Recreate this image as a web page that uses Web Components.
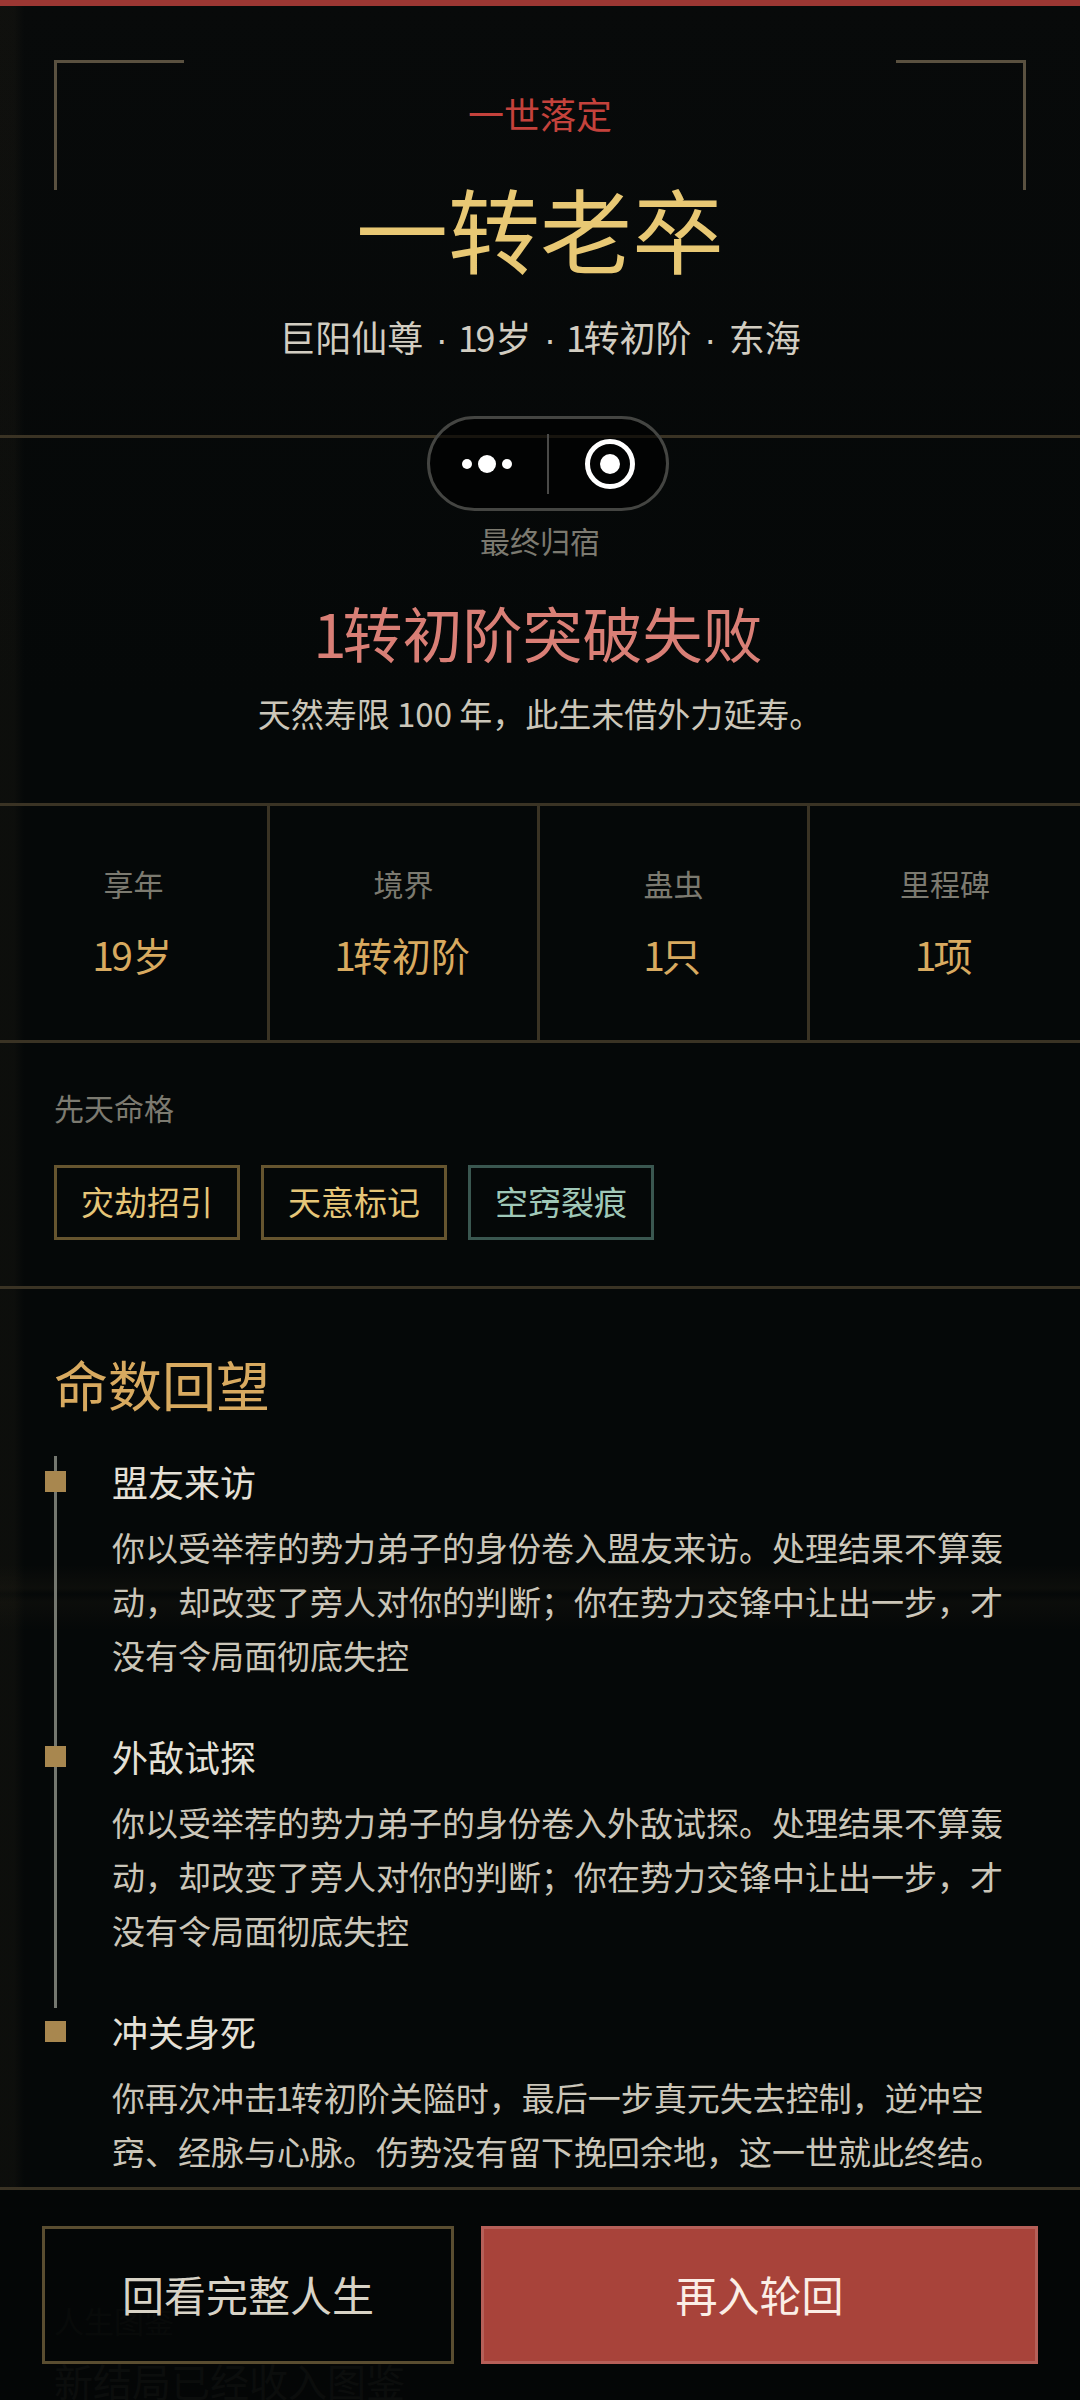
<!DOCTYPE html>
<html lang="zh-CN">
<head>
<meta charset="utf-8">
<title>一世落定</title>
<style>
  html,body{margin:0;padding:0;background:#050808;}
  body{font-family:"Noto Sans CJK SC","Noto Sans",sans-serif;}
  /* the reference face has a narrow 1 and a small middle dot */
  .one{margin:0 -.07em;}
  .sep{font-family:"Liberation Sans",sans-serif;line-height:0;margin:0 2.6px;white-space:pre;}
</style>
</head>
<body>
<result-page>
  <result-hero>
    <span slot="eyebrow">一世落定</span>
    <span slot="name">一转老卒</span>
    <span slot="meta">巨阳仙尊<span class="sep"> · </span><span class="one">1</span>9岁<span class="sep"> · </span><span class="one">1</span>转初阶<span class="sep"> · </span>东海</span>
  </result-hero>
  <result-outcome>
    <span slot="label">最终归宿</span>
    <span slot="main"><span class="one">1</span>转初阶突破失败</span>
    <span slot="desc">天然寿限 100 年，此生未借外力延寿。</span>
  </result-outcome>
  <result-stats>
    <stat-cell label="享年" value="19岁"></stat-cell>
    <stat-cell label="境界" value="1转初阶"></stat-cell>
    <stat-cell label="蛊虫" value="1只"></stat-cell>
    <stat-cell label="里程碑" value="1项"></stat-cell>
  </result-stats>
  <fate-traits>
    <fate-tag>灾劫招引</fate-tag>
    <fate-tag>天意标记</fate-tag>
    <fate-tag tone="jade">空窍裂痕</fate-tag>
  </fate-traits>
  <life-review>
    <span slot="heading">命数回望</span>
    <review-item>
      <span slot="head">盟友来访</span>
      你以受举荐的势力弟子的身份卷入盟友来访。处理结果不算轰动，却改变了旁人对你的判断；你在势力交锋中让出一步，才没有令局面彻底失控
    </review-item>
    <review-item>
      <span slot="head">外敌试探</span>
      你以受举荐的势力弟子的身份卷入外敌试探。处理结果不算轰动，却改变了旁人对你的判断；你在势力交锋中让出一步，才没有令局面彻底失控
    </review-item>
    <review-item last>
      <span slot="head">冲关身死</span>
      你再次冲击<span class="one">1</span>转初阶关隘时，最后一步真元失去控制，逆冲空窍、经脉与心脉。伤势没有留下挽回余地，这一世就此终结。
    </review-item>
  </life-review>
  <codex-note>
    <span slot="label">人生图鉴</span>
    新结局已经收入图鉴
  </codex-note>
  <app-capsule slot="overlay"></app-capsule>
  <action-bar slot="overlay">
    <action-button>回看完整人生</action-button>
    <action-button primary>再入轮回</action-button>
  </action-bar>
</result-page>

<script>
const sectionLine = '#3a3324'

customElements.define('result-page', class extends HTMLElement {
  constructor() {
    super()
    this.attachShadow({ mode: 'open' }).innerHTML = `
    <style>
      :host{
        display:block;
        position:relative;
        width:1080px;
        height:2400px;
        overflow:hidden;
        color:#cfcabd;
        background-color:#050808;
        background-image:
          linear-gradient(180deg,rgba(60,50,30,0) 1565px,rgba(60,50,30,.14) 1588px,rgba(60,50,30,0) 1594px,rgba(60,50,30,.12) 1602px,rgba(60,50,30,0) 1630px),
          linear-gradient(90deg,rgba(70,60,40,.12) 0,rgba(70,60,40,.12) 14px,rgba(70,60,40,0) 24px),
          linear-gradient(180deg,#080a0a 0,#050808 700px);
      }
      .bar{height:6px;background:#9b3733;}
    </style>
    <div class="bar"></div>
    <slot></slot>
    <slot name="overlay"></slot>`
  }
})

customElements.define('result-hero', class extends HTMLElement {
  constructor() {
    super()
    this.attachShadow({ mode: 'open' }).innerHTML = `
    <style>
      :host{
        display:block;
        position:relative;
        padding:85px 0 74px;
        text-align:center;
        border-bottom:3px solid ${sectionLine};
      }
      .eyebrow{font-size:36px;line-height:44px;color:#c4423c;}
      .name{margin-top:37px;font-size:92px;line-height:110px;color:#e8c874;}
      .meta{margin-top:29px;font-size:36px;line-height:50px;color:#d2cdc1;}
      .corner{position:absolute;top:54px;width:127px;height:127px;border-top:3px solid #5a5140;}
      .corner.l{left:54px;border-left:3px solid #5a5140;}
      .corner.r{right:54px;border-right:3px solid #5a5140;}
    </style>
    <i class="corner l"></i>
    <i class="corner r"></i>
    <div class="eyebrow"><slot name="eyebrow"></slot></div>
    <div class="name"><slot name="name"></slot></div>
    <div class="meta"><slot name="meta"></slot></div>`
  }
})

// the host app's menu capsule, it floats over the page
customElements.define('app-capsule', class extends HTMLElement {
  constructor() {
    super()
    this.attachShadow({ mode: 'open' }).innerHTML = `
    <style>
      :host{
        display:block;
        position:absolute;
        left:427px;
        top:416px;
        width:242px;
        height:95px;
      }
      svg{display:block;}
    </style>
    <svg width="242" height="95" viewBox="0 0 242 95">
      <rect x="1.5" y="1.5" width="239" height="92" rx="46" fill="#000" fill-opacity=".6" stroke="#444542" stroke-width="3"/>
      <rect x="120" y="18" width="2" height="60" fill="#4a4a48"/>
      <circle cx="40" cy="48" r="5" fill="#fff"/>
      <circle cx="60" cy="48" r="9" fill="#fff"/>
      <circle cx="80" cy="48" r="5" fill="#fff"/>
      <circle cx="183" cy="48" r="22.5" fill="none" stroke="#fff" stroke-width="5"/>
      <circle cx="183" cy="48" r="10" fill="#fff"/>
    </svg>`
  }
})

customElements.define('result-outcome', class extends HTMLElement {
  constructor() {
    super()
    this.attachShadow({ mode: 'open' }).innerHTML = `
    <style>
      :host{
        display:block;
        padding:82px 0 65px;
        text-align:center;
      }
      .label{font-size:30px;line-height:40px;color:#7c7a70;}
      .main{margin-top:32px;font-size:60px;line-height:80px;color:#d97f76;}
      .desc{margin-top:16px;font-size:33px;line-height:50px;color:#cbc6b9;}
    </style>
    <div class="label"><slot name="label"></slot></div>
    <div class="main"><slot name="main"></slot></div>
    <div class="desc"><slot name="desc"></slot></div>`
  }
})

customElements.define('result-stats', class extends HTMLElement {
  constructor() {
    super()
    this.attachShadow({ mode: 'open' }).innerHTML = `
    <style>
      :host{
        display:grid;
        grid-template-columns:repeat(4,1fr);
        border-top:3px solid ${sectionLine};
        border-bottom:3px solid ${sectionLine};
      }
    </style>
    <slot></slot>`
  }
})

customElements.define('stat-cell', class extends HTMLElement {
  constructor() {
    super()
    this.attachShadow({ mode: 'open' }).innerHTML = `
    <style>
      :host{
        display:block;
        padding:57px 0 58px;
        text-align:center;
        border-right:3px solid ${sectionLine};
      }
      :host(:last-child){border-right:0;}
      .label{font-size:30px;line-height:40px;color:#7c7a70;}
      .value{margin-top:23px;font-size:39px;line-height:56px;color:#d8aa60;}
      .one{margin:0 -.07em;}
    </style>
    <div class="label"></div>
    <div class="value"></div>`
  }
  connectedCallback() {
    this.shadowRoot.querySelector('.label').textContent = this.getAttribute('label')
    this.shadowRoot.querySelector('.value').innerHTML = this.getAttribute('value').replace('1', '<span class="one">1</span>')
  }
})

customElements.define('fate-traits', class extends HTMLElement {
  constructor() {
    super()
    this.attachShadow({ mode: 'open' }).innerHTML = `
    <style>
      :host{
        display:block;
        padding:44px 54px 46px;
        border-bottom:3px solid ${sectionLine};
      }
      .label{font-size:30px;line-height:40px;color:#7c7a70;}
      .tags{display:flex;gap:21px;margin-top:38px;}
    </style>
    <div class="label">先天命格</div>
    <div class="tags"><slot></slot></div>`
  }
})

customElements.define('fate-tag', class extends HTMLElement {
  constructor() {
    super()
    this.attachShadow({ mode: 'open' }).innerHTML = `
    <style>
      :host{
        display:block;
        box-sizing:border-box;
        height:75px;
        padding:0 24px;
        font-size:33px;
        line-height:66px;
        color:#e6c678;
        border:3px solid #66552f;
      }
      :host([tone=jade]){color:#a0c8b8;border-color:#3a5750;}
    </style>
    <slot></slot>`
  }
})

customElements.define('life-review', class extends HTMLElement {
  constructor() {
    super()
    this.attachShadow({ mode: 'open' }).innerHTML = `
    <style>
      :host{display:block;padding:60px 54px 0;}
      .heading{font-size:54px;line-height:70px;color:#d8aa60;margin-bottom:39px;}
    </style>
    <div class="heading"><slot name="heading"></slot></div>
    <slot></slot>`
  }
})

customElements.define('review-item', class extends HTMLElement {
  constructor() {
    super()
    this.attachShadow({ mode: 'open' }).innerHTML = `
    <style>
      :host{
        display:block;
        position:relative;
        padding:0 0 51px 55px;
        border-left:3px solid #74776f;
        font-size:33px;
        line-height:54px;
        color:#cbc6b9;
      }
      :host([last]){border-left-color:transparent;padding-bottom:0;}
      .dot{position:absolute;left:-12px;top:15px;width:21px;height:21px;background:#a8874f;}
      .head{font-size:36px;line-height:50px;color:#e4e0d6;margin-top:-2px;margin-bottom:14px;}
    </style>
    <i class="dot"></i>
    <div class="head"><slot name="head"></slot></div>
    <slot></slot>`
  }
})

// sits under the action bar, only shows through as a ghost
customElements.define('codex-note', class extends HTMLElement {
  constructor() {
    super()
    this.attachShadow({ mode: 'open' }).innerHTML = `
    <style>
      :host{
        display:block;
        padding:122px 54px 0;
        font-size:39px;
        line-height:56px;
        color:#cfcabd;
      }
      .label{font-size:30px;line-height:40px;color:#7c7a70;margin-bottom:12px;}
    </style>
    <div class="label"><slot name="label"></slot></div>
    <slot></slot>`
  }
})

customElements.define('action-bar', class extends HTMLElement {
  constructor() {
    super()
    this.attachShadow({ mode: 'open' }).innerHTML = `
    <style>
      :host{
        display:grid;
        grid-template-columns:412px 557px;
        gap:27px;
        position:absolute;
        left:0;
        right:0;
        bottom:0;
        box-sizing:border-box;
        height:213px;
        padding:36px 42px 0;
        background:rgba(4,6,6,.97);
        border-top:3px solid ${sectionLine};
      }
    </style>
    <slot></slot>`
  }
})

customElements.define('action-button', class extends HTMLElement {
  constructor() {
    super()
    this.attachShadow({ mode: 'open' }).innerHTML = `
    <style>
      :host{
        display:flex;
        align-items:center;
        justify-content:center;
        box-sizing:border-box;
        height:138px;
        padding-bottom:3px;
        font-size:42px;
        color:#d8d3c6;
        border:3px solid #5a4d30;
      }
      :host([primary]){color:#fbeee6;background:#a8433a;border-color:#b65f58;}
    </style>
    <slot></slot>`
  }
})
</script>
</body>
</html>
